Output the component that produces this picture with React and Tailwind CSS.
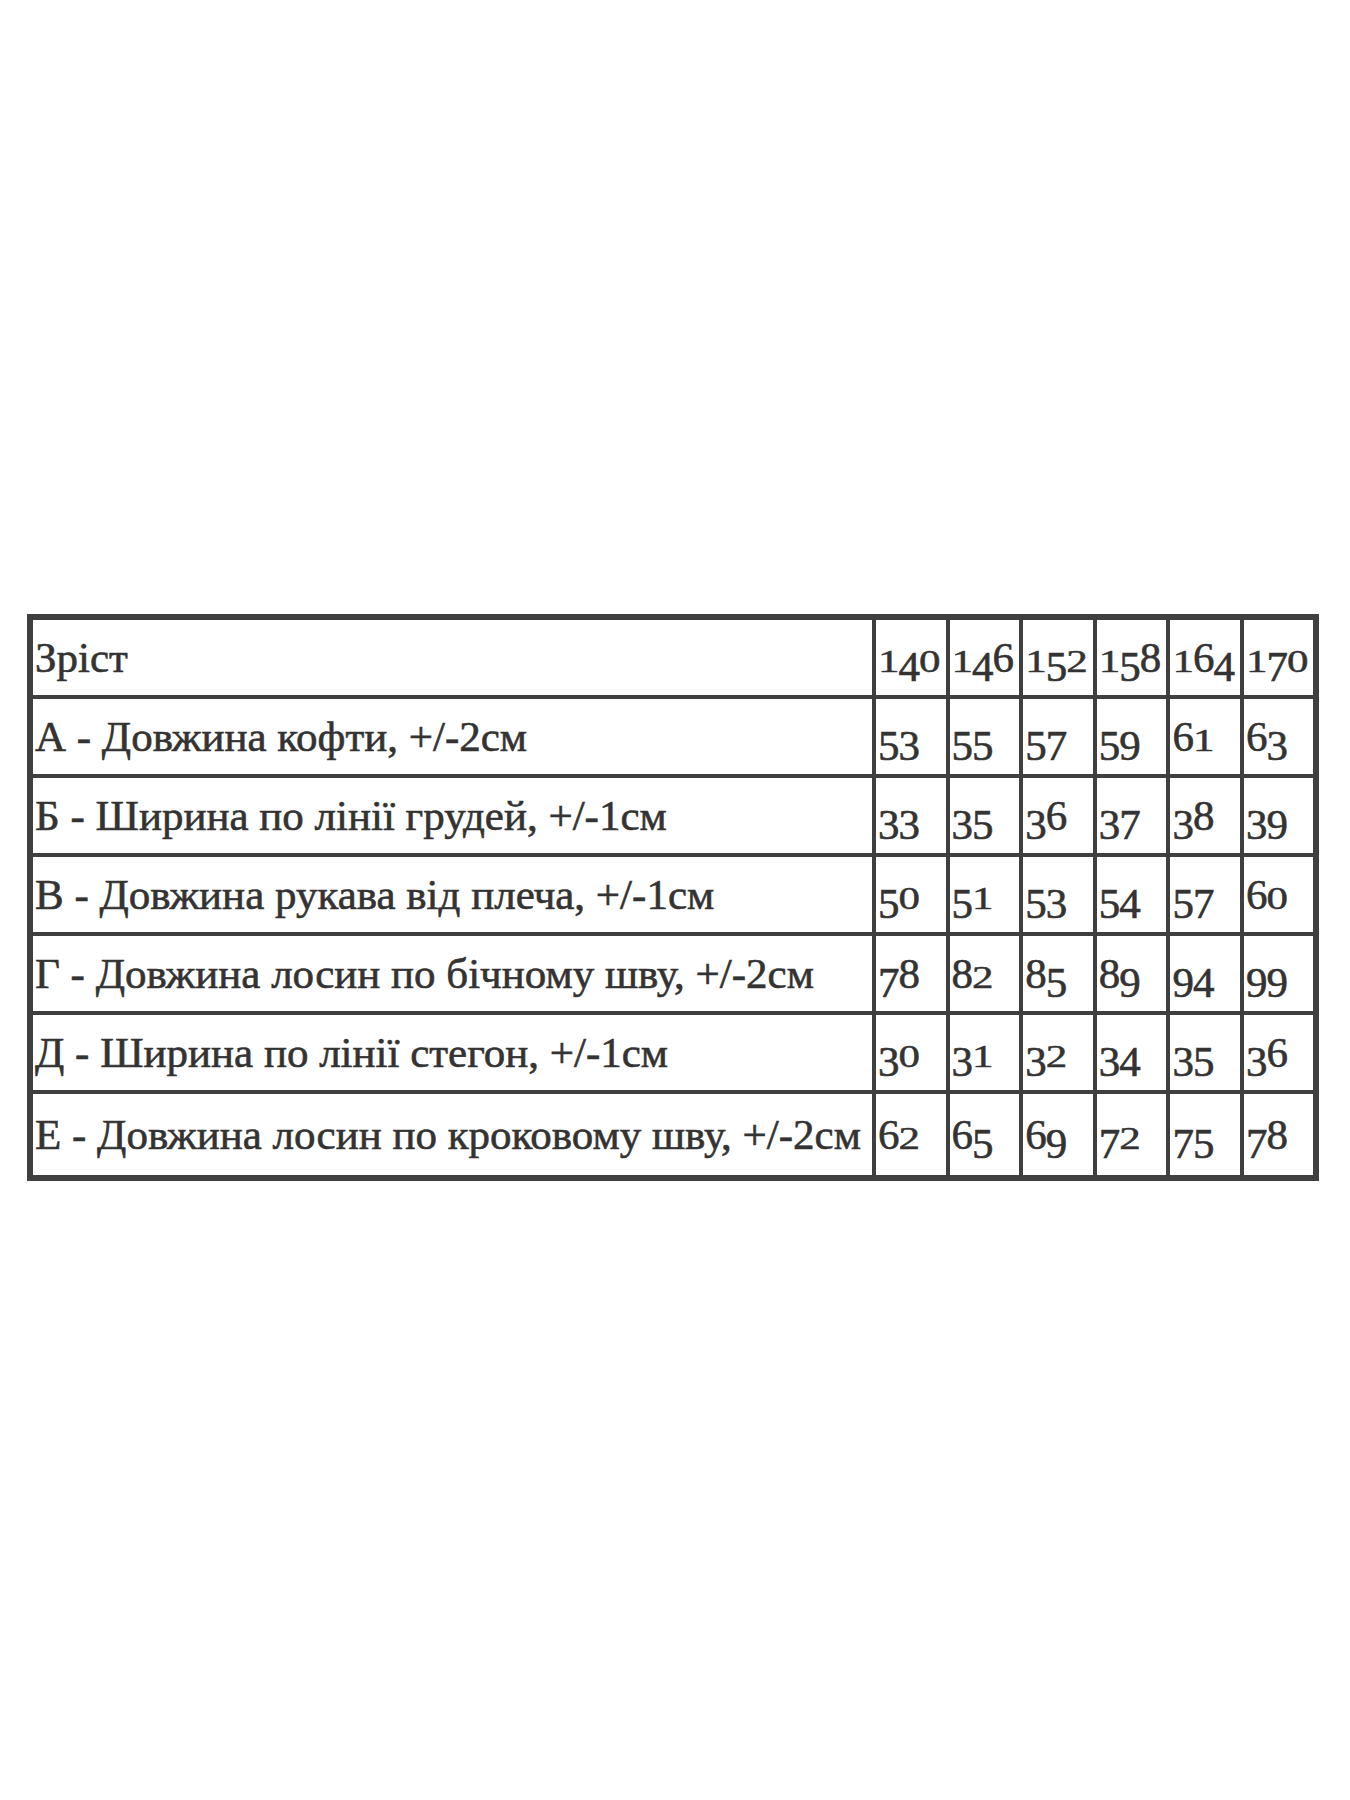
import React from 'react';

const sizes = ['140', '146', '152', '158', '164', '170'];

const rows = [
    { label: 'А - Довжина кофти, +/-2см', values: ['53', '55', '57', '59', '61', '63'] },
    { label: 'Б - Ширина по лінії грудей, +/-1см', values: ['33', '35', '36', '37', '38', '39'] },
    { label: 'В - Довжина рукава від плеча, +/-1см', values: ['50', '51', '53', '54', '57', '60'] },
    { label: 'Г - Довжина лосин по бічному шву, +/-2см', values: ['78', '82', '85', '89', '94', '99'] },
    { label: 'Д - Ширина по лінії стегон, +/-1см', values: ['30', '31', '32', '34', '35', '36'] },
    { label: 'Е - Довжина лосин по кроковому шву, +/-2см', values: ['62', '65', '69', '72', '75', '78'] },
];

// old-style figures look: 0 1 2 sit at x-height, 3 4 5 7 9 drop below the line, 6 8 stay tall
const Digit = ({ d }) => {
    if ('012'.includes(d)) return <span className="inline-block scale-y-[0.72] origin-[50%_84%]">{d}</span>;
    if ('34579'.includes(d)) return <span className="relative top-[0.2em]">{d}</span>;
    return <span>{d}</span>;
};

const Num = ({ value }) => (
    <span className="tracking-[-1px]">
        {value.split('').map((d, i) => <Digit key={i} d={d} />)}
    </span>
);

const cell = 'border-4 border-[#3f3f3f] px-[2px]';

const App = () => {
    return (
        <div className="w-[1350px] h-[1800px] bg-white font-['Liberation_Serif',serif] text-[#333333] [-webkit-text-stroke:0.6px_#333333]">
            <div className="pt-[614px] pl-[27px]">
                <table className="border-collapse border-[6px] border-[#3f3f3f] text-[43px] leading-none">
                    <tbody>
                        <tr className="h-[80px]">
                            <td className={`w-[844px] whitespace-nowrap ${cell}`}>Зріст</td>
                            {sizes.map(s => (
                                <td key={s} className={`w-[73.6px] ${cell}`}><Num value={s} /></td>
                            ))}
                        </tr>
                        {rows.map((r, idx) => (
                            <tr key={r.label} className={idx === rows.length - 1 ? 'h-[86px]' : 'h-[79px]'}>
                                <td className={`whitespace-nowrap ${cell}`}>{r.label}</td>
                                {r.values.map((v, i) => (
                                    <td key={i} className={cell}><Num value={v} /></td>
                                ))}
                            </tr>
                        ))}
                    </tbody>
                </table>
            </div>
        </div>
    );
};

export default App;
